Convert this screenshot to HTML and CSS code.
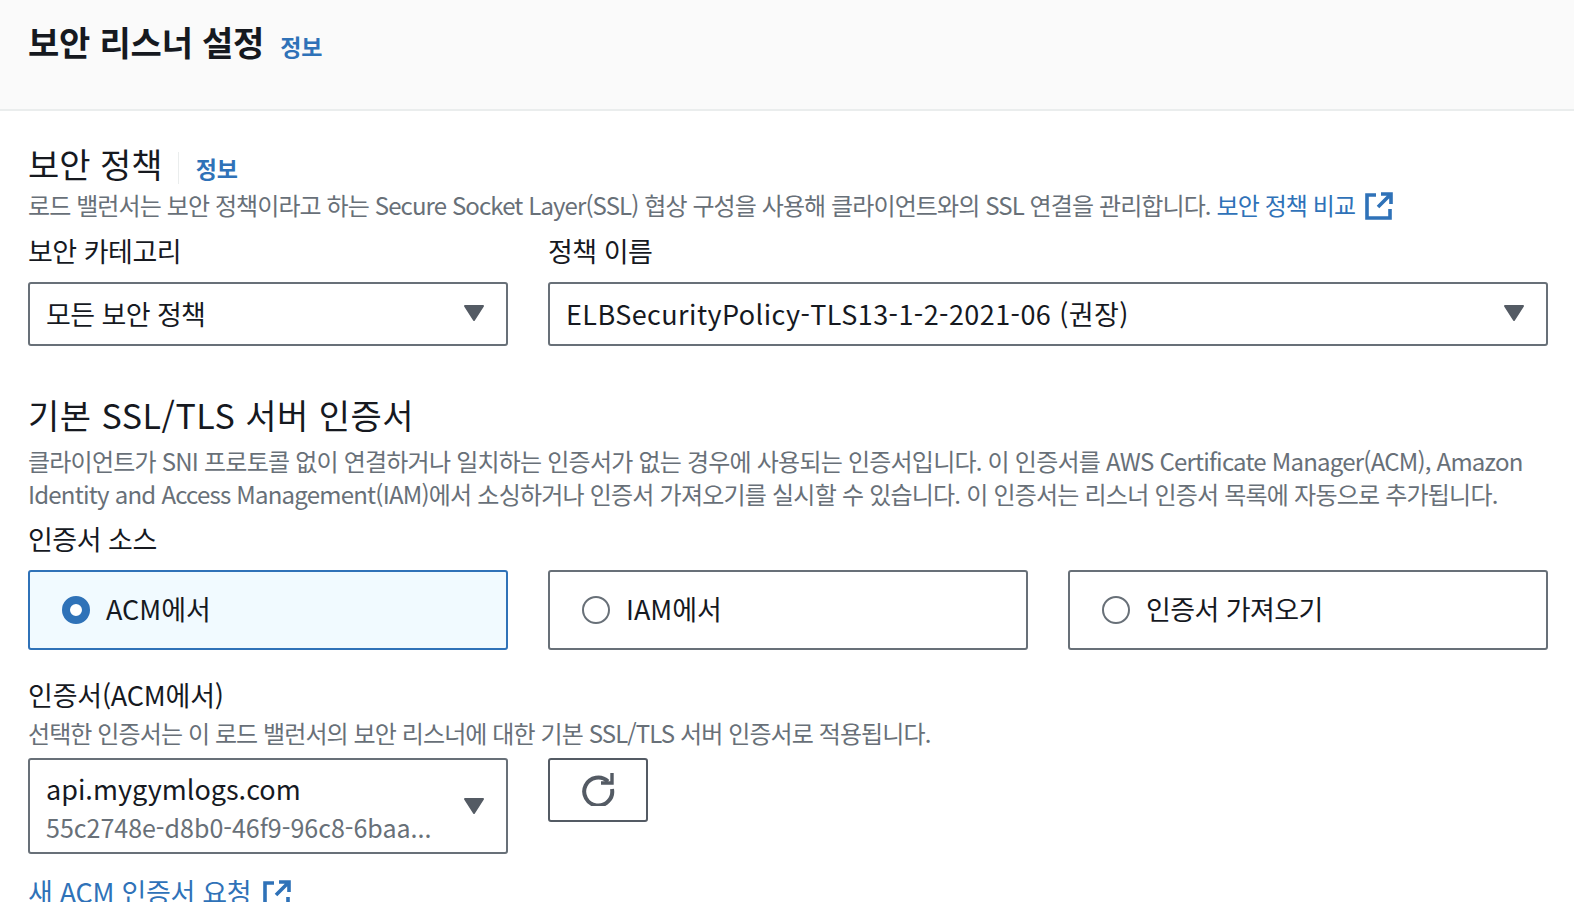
FILE: index.html
```html
<!DOCTYPE html>
<html lang="ko">
<head>
    <meta charset="UTF-8">
    <meta name="viewport" content="width=device-width, initial-scale=1.0">
    <title>보안 리스너 설정</title>
    <link rel="stylesheet" href="styles.css">
</head>
<body>
    <header class="panel-header">
        <h1>보안 리스너 설정</h1>
        <a class="info-link" href="#">정보</a>
    </header>

    <main class="panel-body">
        <section class="policy">
            <div class="section-title">
                <h2>보안 정책</h2>
                <a class="info-link info-link-split" href="#">정보</a>
            </div>
            <p class="desc">로드 밸런서는 보안 정책이라고 하는 Secure Socket Layer(SSL) 협상 구성을 사용해 클라이언트와의 SSL 연결을 관리합니다. <a class="ext-link" href="#">보안 정책 비교 <svg class="ext-icon" viewBox="0 0 28 28"><path d="M11 3H2v23h23v-9M16 2h10v10M26 2L13 15" fill="none" stroke="currentColor" stroke-width="3.6"/></svg></a></p>
            <div class="policy-grid">
                <div class="field">
                    <label>보안 카테고리</label>
                    <div class="select select-ko">
                        <span>모든 보안 정책</span>
                        <svg class="caret" viewBox="0 0 22 18"><path d="M2 2h18L11 16z" fill="#545b64" stroke="#545b64" stroke-width="2" stroke-linejoin="round"/></svg>
                    </div>
                </div>
                <div class="field">
                    <label>정책 이름</label>
                    <div class="select">
                        <span class="policy-name">ELBSecurityPolicy-TLS13-1-2-2021-06 (권장)</span>
                        <svg class="caret" viewBox="0 0 22 18"><path d="M2 2h18L11 16z" fill="#545b64" stroke="#545b64" stroke-width="2" stroke-linejoin="round"/></svg>
                    </div>
                </div>
            </div>
        </section>

        <section class="cert">
            <h2>기본 SSL/TLS 서버 인증서</h2>
            <p class="desc">클라이언트가 SNI 프로토콜 없이 연결하거나 일치하는 인증서가 없는 경우에 사용되는 인증서입니다. 이 인증서를 AWS Certificate Manager(ACM), Amazon Identity and Access Management(IAM)에서 소싱하거나 인증서 가져오기를 실시할 수 있습니다. 이 인증서는 리스너 인증서 목록에 자동으로 추가됩니다.</p>

            <label class="source-label">인증서 소스</label>
            <div class="source-grid">
                <div class="source-card selected"><span class="radio"></span><span class="card-text">ACM에서</span></div>
                <div class="source-card"><span class="radio"></span><span class="card-text">IAM에서</span></div>
                <div class="source-card"><span class="radio"></span><span class="card-text card-ko">인증서 가져오기</span></div>
            </div>

            <label class="acm-label">인증서(ACM에서)</label>
            <p class="desc acm-desc">선택한 인증서는 이 로드 밸런서의 보안 리스너에 대한 기본 SSL/TLS 서버 인증서로 적용됩니다.</p>
            <div class="acm-row">
                <div class="select select-tall">
                    <div class="select-text">
                        <div>api.mygymlogs.com</div>
                        <div class="select-sub">55c2748e-d8b0-46f9-96c8-6baa...</div>
                    </div>
                    <svg class="caret" viewBox="0 0 22 18"><path d="M2 2h18L11 16z" fill="#545b64" stroke="#545b64" stroke-width="2" stroke-linejoin="round"/></svg>
                </div>
                <button class="refresh" type="button">
                    <svg viewBox="0 0 34 34"><path d="M27 9.5A14 14 0 1 0 31 17" fill="none" stroke="#545b64" stroke-width="4"/><path d="M20 11h11V1" fill="none" stroke="#545b64" stroke-width="3.4"/></svg>
                </button>
            </div>
            <a class="ext-link new-cert" href="#">새 ACM 인증서 요청 <svg class="ext-icon" viewBox="0 0 28 28"><path d="M11 3H2v23h23v-9M16 2h10v10M26 2L13 15" fill="none" stroke="currentColor" stroke-width="3.6"/></svg></a>
        </section>
    </main>
</body>
</html>
```

FILE: styles.css
```css
* {
    box-sizing: border-box;
}
html, body {
    height: 902px;
    overflow: hidden;
}
body {
    font-family: "Noto Sans CJK KR", "Noto Sans", sans-serif;
    margin: 0;
    color: #16191f;
    background-color: #fff;
    font-size: 27px;
}
a {
    color: #2f72b8;
    text-decoration: none;
}
h1, h2, p {
    margin: 0;
    font-weight: 400;
}
.panel-header {
    height: 111px;
    padding: 18px 28px 0;
    background-color: #fafafa;
    border-bottom: 2px solid #eaeded;
    display: flex;
    align-items: baseline;
    gap: 16px;
}
.panel-header h1 {
    font-size: 34px;
    font-weight: 700;
    line-height: 48px;
    letter-spacing: -0.2px;
}
.info-link {
    font-size: 23px;
    font-weight: 700;
}
.panel-body {
    padding: 30px 26px 0 28px;
}
.section-title {
    display: flex;
    align-items: baseline;
}
h2 {
    font-size: 34px;
    line-height: 46px;
}
.info-link-split {
    margin-left: 15px;
    padding-left: 17px;
    border-left: 1px solid #eaeded;
    line-height: 32px;
}
.desc {
    font-size: 24px;
    line-height: 33px;
    color: #687078;
    letter-spacing: -0.78px;
}
.policy .desc {
    margin-top: 1px;
    letter-spacing: -0.9px;
}
.ext-link {
    white-space: nowrap;
}
.ext-icon {
    width: 28px;
    height: 28px;
    vertical-align: -5px;
    margin-left: 4px;
}
.policy-grid {
    display: grid;
    grid-template-columns: 480px 1fr;
    gap: 40px;
    margin-top: 11px;
}
.field label {
    display: block;
    line-height: 38px;
    letter-spacing: -0.5px;
}
.select {
    margin-top: 12px;
    height: 64px;
    border: 2px solid #687078;
    border-radius: 3px;
    padding: 0 21px 2px 16px;
    display: flex;
    align-items: center;
    justify-content: space-between;
}
.select-ko {
    letter-spacing: -0.6px;
}
.policy-name {
    letter-spacing: 0.43px;
}
.caret {
    width: 22px;
    height: 18px;
    flex: none;
}
.cert {
    margin-top: 46px;
}
.cert h2 {
    letter-spacing: 0.5px;
}
.cert > .desc {
    margin-top: 6px;
}
.source-label {
    display: block;
    margin-top: 10px;
    line-height: 38px;
    letter-spacing: -0.5px;
}
.source-grid {
    display: grid;
    grid-template-columns: repeat(3, 1fr);
    gap: 40px;
    margin-top: 12px;
}
.source-card {
    height: 80px;
    border: 2px solid #687078;
    border-radius: 3px;
    padding-left: 32px;
    display: flex;
    align-items: center;
    gap: 16px;
}
.card-text {
    margin-bottom: 3px;
}
.card-ko {
    letter-spacing: -0.6px;
}
.source-card.selected {
    border-color: #2f72b8;
    background-color: #f1faff;
}
.radio {
    width: 28px;
    height: 28px;
    border-radius: 50%;
    border: 2px solid #687078;
    background-color: #fff;
}
.selected .radio {
    border: 8px solid #2f72b8;
}
.acm-label {
    display: block;
    margin-top: 26px;
    line-height: 38px;
    letter-spacing: -0.2px;
}
.cert > .acm-desc {
    margin-top: 2px;
    letter-spacing: -0.9px;
}
.acm-row {
    display: flex;
    align-items: flex-start;
    gap: 40px;
    margin-top: 9px;
}
.select-tall {
    margin-top: 0;
    width: 480px;
    height: 96px;
    padding-bottom: 0;
}
.select-text {
    line-height: 38px;
    margin-top: 4px;
}
.select-tall .caret {
    margin-top: -1px;
}
.select-sub {
    font-size: 25px;
    color: #687078;
}
.refresh {
    width: 100px;
    height: 64px;
    background-color: #fff;
    border: 2px solid #545b64;
    border-radius: 3px;
    padding: 0 0 3px;
    display: flex;
    align-items: center;
    justify-content: center;
}
.refresh svg {
    width: 34px;
    height: 34px;
}
.new-cert {
    display: block;
    margin-top: 19px;
    line-height: 38px;
    letter-spacing: -0.3px;
}
```
